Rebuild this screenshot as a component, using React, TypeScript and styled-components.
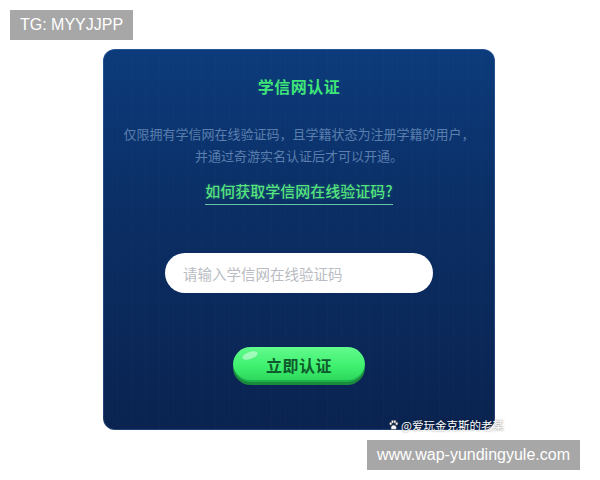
import React from 'react';
import styled, { createGlobalStyle } from 'styled-components';

const Global = createGlobalStyle`
  html, body {
    margin: 0;
    padding: 0;
    background: #ffffff;
  }
  body {
    font-family: "Noto Sans CJK SC", "Noto Sans", sans-serif;
  }
`;

const Page = styled.div`
  position: relative;
  width: 600px;
  height: 480px;
  overflow: hidden;
  padding: 49px 0 0 103px;
  box-sizing: border-box;
`;

const Stamp = styled.div<{ $top: number; $left: number }>`
  position: absolute;
  top: ${p => p.$top}px;
  left: ${p => p.$left}px;
  background: #a7a7a7;
  color: #ffffff;
  font-family: "Liberation Sans", Arial, sans-serif;
  font-size: 16px;
  line-height: 30px;
  padding: 0 10px;
  white-space: nowrap;
  z-index: 3;
`;

const Card = styled.div`
  width: 392px;
  height: 381px;
  border-radius: 12px;
  background:
    repeating-linear-gradient(90deg, rgba(255,255,255,0.01) 0 1px, transparent 1px 14px),
    linear-gradient(180deg, #0c3b7b 0%, #0b2f66 40%, #0a2350 100%);
  box-shadow: inset 0 0 0 1px rgba(120, 170, 230, 0.22);
  display: flex;
  flex-direction: column;
  align-items: center;
  padding-top: 27px;
  box-sizing: border-box;
`;

const Title = styled.h1`
  margin: 0;
  font-size: 16px;
  line-height: 20px;
  font-weight: 700;
  color: #3fe578;
  letter-spacing: 0.5px;
`;

const Desc = styled.p`
  margin: 27px 0 0;
  font-size: 13px;
  line-height: 22px;
  color: #5a7fae;
  text-align: center;
`;

const HelpLink = styled.a`
  margin-top: 14px;
  font-size: 15px;
  line-height: 20px;
  font-weight: 500;
  color: #55e37e;
  text-shadow: 0 0 4px rgba(80, 230, 130, 0.25);
  text-decoration: none;
  padding-bottom: 3px;
  border-bottom: 1.5px solid #62c7a2;
`;

const Input = styled.input`
  margin-top: 48px;
  width: 268px;
  height: 40px;
  border: none;
  border-radius: 20px;
  background: #ffffff;
  padding: 0 18px;
  box-sizing: border-box;
  font-family: "Noto Sans CJK SC", sans-serif;
  font-size: 14.5px;
  outline: none;
  &::placeholder {
    color: #b9bcc2;
  }
`;

const Button = styled.button`
  position: relative;
  margin-top: 54px;
  width: 132px;
  height: 35px;
  border: none;
  border-radius: 18px;
  background: linear-gradient(180deg, #63fb8d 0%, #3ef06e 55%, #2bd45a 100%);
  box-shadow: 0 3px 0 #1a8a3c, inset 0 -2px 0 rgba(0, 120, 40, 0.35);
  color: #0f5a2c;
  font-family: "Noto Sans CJK SC", sans-serif;
  font-size: 16px;
  font-weight: 700;
  letter-spacing: 0.5px;
  cursor: pointer;
  &::before {
    content: '';
    position: absolute;
    left: 9px;
    top: 5px;
    width: 16px;
    height: 7px;
    border-radius: 50%;
    background: rgba(255, 255, 255, 0.45);
    transform: rotate(-20deg);
  }
`;

const Credit = styled.div`
  position: absolute;
  left: 388px;
  top: 417px;
  display: flex;
  align-items: center;
  gap: 2px;
  font-size: 11.5px;
  line-height: 16px;
  color: #ffffff;
  text-shadow: 0 0 2px rgba(0, 0, 0, 0.6);
  z-index: 2;
`;

const Paw = () => (
  <svg width="11" height="11" viewBox="0 0 12 12">
    <g fill="#ffffff" stroke="#555" strokeWidth="0.6">
      <ellipse cx="3" cy="4" rx="1.3" ry="1.6" />
      <ellipse cx="5" cy="2" rx="1.3" ry="1.6" />
      <ellipse cx="7.5" cy="2" rx="1.3" ry="1.6" />
      <ellipse cx="9.5" cy="4" rx="1.3" ry="1.6" />
      <path d="M6.2 5.5 C4 5.5 2.8 8 3.4 9.5 C4 10.8 5.2 10 6.2 10 C7.2 10 8.5 10.8 9 9.5 C9.6 8 8.4 5.5 6.2 5.5 Z" />
    </g>
  </svg>
);

export default function App() {
  return (
    <>
      <Global />
      <Page>
        <Stamp $top={10} $left={10}>TG: MYYJJPP</Stamp>
        <Card>
          <Title>学信网认证</Title>
          <Desc>
            仅限拥有学信网在线验证码，且学籍状态为注册学籍的用户，
            <br />
            并通过奇游实名认证后才可以开通。
          </Desc>
          <HelpLink href="#">如何获取学信网在线验证码?</HelpLink>
          <Input placeholder="请输入学信网在线验证码" />
          <Button>立即认证</Button>
        </Card>
        <Credit>
          <Paw />
          @爱玩金克斯的老某
        </Credit>
        <Stamp $top={440} $left={367}>www.wap-yundingyule.com</Stamp>
      </Page>
    </>
  );
}
